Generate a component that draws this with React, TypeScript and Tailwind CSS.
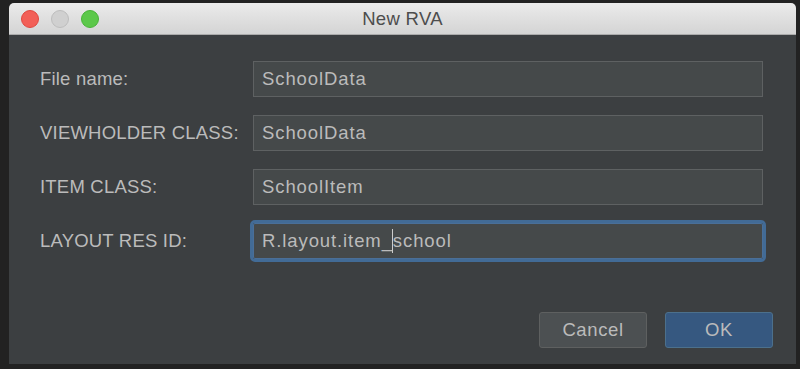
import React from "react";

const font = { fontFamily: '"Liberation Sans", Arial, sans-serif' };

function Field({ label, value, focused }: { label: string; value: React.ReactNode; focused?: boolean }) {
  return (
    <div className="flex items-center h-[36px]">
      <div className="w-[213px] text-[18.5px] tracking-[0.2px] text-[#bbbbbb] leading-none">{label}</div>
      <div
        className={
          "flex-1 h-[36px] flex items-center pl-[8px] bg-[#45494a] text-[18.5px] tracking-[0.9px] text-[#bbbbbb] leading-none " +
          (focused
            ? "border border-[#4a6f98] outline outline-[3px] outline-[#426b96] rounded-[2px]"
            : "border border-[#5e6162]")
        }
      >
        {value}
      </div>
    </div>
  );
}

export default function App() {
  return (
    <div className="w-[800px] h-[369px] bg-[#222222] overflow-hidden" style={font}>
      <div className="ml-[9px] mt-[3px] w-[787px] h-[361px] flex flex-col rounded-t-[5px] overflow-hidden">
        <div className="relative h-[32px] bg-gradient-to-b from-[#ebebeb] to-[#d4d4d4] border-b border-[#ababab] flex items-center justify-center">
          <div className="absolute left-[12px] top-[7px] flex gap-[12px]">
            <div className="w-[18px] h-[18px] rounded-full bg-[#f25f57] border border-[#e0473f]" />
            <div className="w-[18px] h-[18px] rounded-full bg-[#d0d0d0] border border-[#bdbdbd]" />
            <div className="w-[18px] h-[18px] rounded-full bg-[#5cc84a] border border-[#48b338]" />
          </div>
          <div className="text-[18.5px] tracking-[0.3px] text-[#4d4d4d] leading-none pt-[1px]">New RVA</div>
        </div>
        <div className="flex-1 bg-[#3c3f41] flex flex-col pl-[31px] pr-[33px] pt-[26px]">
          <div className="flex flex-col gap-[18px]">
            <Field label="File name:" value="SchoolData" />
            <Field label="VIEWHOLDER CLASS:" value="SchoolData" />
            <Field label="ITEM CLASS:" value="SchoolItem" />
            <Field
              label="LAYOUT RES ID:"
              focused
              value={
                <span className="flex items-center">
                  R.layout.item_
                  <span className="inline-block w-[1px] h-[24px] bg-[#cccccc] ml-[-1px] mr-[0px]" />
                  school
                </span>
              }
            />
          </div>
          <div className="flex justify-end gap-[18px] mt-[53px] mr-[-10px]">
            <button className="w-[108px] h-[36px] bg-[#4c5052] border border-[#5e6060] rounded-[3px] text-[18.5px] tracking-[0.6px] text-[#bbbbbb]">
              Cancel
            </button>
            <button className="w-[108px] h-[36px] bg-[#365880] border border-[#4c708c] rounded-[3px] text-[18.5px] tracking-[0.6px] text-[#bbbbbb]">
              OK
            </button>
          </div>
        </div>
      </div>
    </div>
  );
}
